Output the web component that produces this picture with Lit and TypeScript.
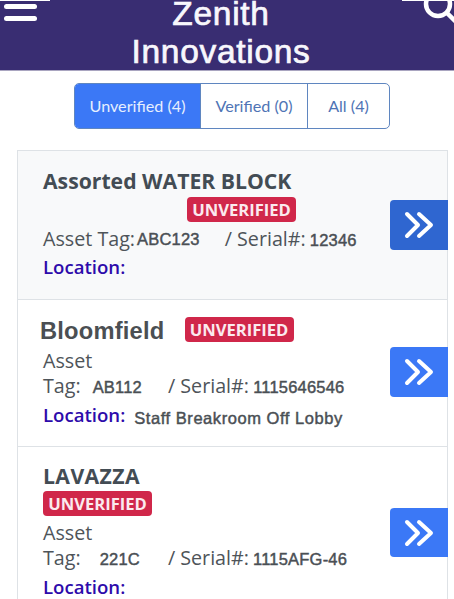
import { LitElement, html, css, svg } from "lit";
import { customElement } from "lit/decorators.js";

type Item = { cls: string; name: string; tag: string; serial: string; loc: string; shade?: boolean };

const items: Item[] = [
  { cls: "a", name: "Assorted WATER BLOCK", tag: "ABC123", serial: "12346", loc: "", shade: true },
  { cls: "b", name: "Bloomfield", tag: "AB112", serial: "1115646546", loc: "Staff Breakroom Off Lobby" },
  { cls: "c", name: "LAVAZZA", tag: "221C", serial: "1115AFG-46", loc: "" },
];

const chevrons = svg`<svg class="chev" viewBox="0 0 30 28" width="30" height="28" fill="none" stroke="#fff" stroke-width="4" stroke-linecap="round" stroke-linejoin="round"><path d="M3 3l11 11L3 25M15 3l12 11-12 11"/></svg>`;

@customElement("app-root")
export class AppRoot extends LitElement {
  static styles = css`
    :host { display: block; width: 454px; height: 599px; overflow: hidden; background: #fff; font-family: "Open Sans", "Noto Sans", sans-serif; color: #454d55; }
    .header { position: relative; height: 71px; background: #392d72; border-bottom: 1px solid #a9a5c0; box-sizing: border-box; display: flex; justify-content: center; }
    .title { width: 220px; margin-left: -12px; text-align: center; color: #f8f7fc; font: 500 33.5px "Liberation Sans", Arial, sans-serif; letter-spacing: 0.7px; -webkit-text-stroke: 0.7px #f8f7fc; }
    .title span { display: block; }
    .title .t1 { line-height: 28px; }
    .title .t2 { line-height: 36px; margin-top: 6px; }
    .strip { position: absolute; top: 0; height: 1px; background: #fff; }
    .strip.l { left: 0; width: 50px; }
    .strip.r { right: 0; width: 52px; }
    .burger { position: absolute; left: 4px; top: 4px; width: 33px; display: flex; flex-direction: column; gap: 7px; }
    .burger i { display: block; height: 5px; border-radius: 2.5px; background: #fff; }
    .search { position: absolute; right: 0; top: 0; }
    .tabs { display: flex; width: 316px; height: 46px; box-sizing: border-box; margin: 12px 0 21px 74px; border: 1px solid #5f86c0; border-radius: 5px; overflow: hidden; font: 400 16.2px "Lato", sans-serif; color: #4f74b5; }
    .tabs div { display: flex; align-items: center; justify-content: center; padding-bottom: 2px; box-sizing: border-box; }
    .tabs .on { width: 125px; background: #3b78f6; color: #e6effe; }
    .tabs .mid { width: 108px; border-left: 1px solid #5f86c0; border-right: 1px solid #5f86c0; }
    .tabs .end { flex: 1; }
    .list { margin-left: 17px; width: 431px; box-sizing: border-box; border: 1px solid #dee2e6; border-bottom: 0; }
    .card { display: flex; align-items: center; box-sizing: border-box; border-bottom: 1px solid #dee2e6; background: #fff; }
    .card.shade { background: #f8f9fa; }
    .card.a { height: 149px; }
    .card.b { height: 147px; }
    .card.c { height: 160px; align-items: flex-start; }
    .info { flex: 1; padding-left: 25px; min-width: 0; }
    .name { font-size: 21.2px; font-weight: 700; line-height: 28px; color: #434c54; }
    .badge { display: inline-block; background: #d0274a; color: #fbeaee; font-size: 16.6px; font-weight: 700; line-height: 25px; height: 25px; width: 109px; text-align: center; border-radius: 4px; }
    .lab { font-size: 19.7px; color: #4e5459; }
    .val { font: 400 16.5px "Liberation Sans", Arial, sans-serif; letter-spacing: 0.2px; color: #4a4f54; -webkit-text-stroke: 0.45px #4a4f54; }
    .loc { font-size: 18.6px; font-weight: 600; color: #2d0bab; }
    .row { line-height: 26px; white-space: nowrap; }
    .go { flex: none; width: 58px; height: 50px; margin-right: -1px; border-radius: 4px 0 0 4px; background: #3b78f6; display: flex; align-items: center; justify-content: center; }
    .card.shade .go { background: #2f66d0; }
    .a .info { padding-top: 16px; align-self: flex-start; }
    .a .badge { display: block; margin-left: 144px; margin-top: 2px; }
    .a .r1 { margin-top: 4px; }
    .a .r2 { margin-top: 1px; }
    .a .t { margin: 0 25px 0 2px; position: relative; top: -1px; }
    .b .info { align-self: flex-start; padding-top: 16px; }
    .b .name { display: inline-block; font: 700 23.7px/30px "Liberation Sans", Arial, sans-serif; letter-spacing: 0.2px; color: #4b4f53; margin-left: -3px; margin-right: 16px; }
    .b .badge { vertical-align: 3px; }
    .b .r0 { margin-top: 2px; }
    .b .t { margin: 0 26px 0 12px; }
    .b .r1 { margin-top: -2px; }
    .b .r2 { margin-top: 2px; }
    .b .v2 { margin-left: 9px; position: relative; top: 2px; letter-spacing: 0.55px; }
    .b .go { margin-top: -2px; }
    .c .info { padding-top: 15px; }
    .c .name { letter-spacing: 0.4px; }
    .c .t { margin: 0 28px 0 19px; }
    .c .r0 { margin-top: 4px; }
    .c .badge { display: block; margin-top: 1px; }
    .c .r1 { margin-top: -2px; }
    .c .r2 { margin-top: 2px; }
    .c .go { margin-top: 61px; height: 49px; }
  `;

  private row(i: Item) {
    const wrap = i.cls !== "a";
    return html`
      ${wrap ? html`<div class="row r0"><span class="lab">Asset</span></div>` : ""}
      <div class="row r1"><span class="lab">${wrap ? "Tag:" : "Asset Tag:"}</span><span class="val t">${i.tag}</span><span class="lab">/ Serial#:</span> <span class="val">${i.serial}</span></div>
      <div class="row r2"><span class="loc">Location:</span>${i.loc ? html`<span class="val v2">${i.loc}</span>` : ""}</div>
    `;
  }

  render() {
    return html`
      <div class="header">
        <div class="strip l"></div><div class="strip r"></div>
        <div class="burger"><i></i><i></i></div>
        <div class="title"><span class="t1">Zenith</span><span class="t2">Innovations</span></div>
        <svg class="search" width="52" height="30" viewBox="0 0 52 30" fill="none" stroke="#fff" stroke-width="4.5" stroke-linecap="round"><circle cx="36" cy="4" r="12"/><path d="M45 13l8 8"/></svg>
      </div>
      <div class="tabs">
        <div class="on">Unverified (4)</div>
        <div class="mid">Verified (0)</div>
        <div class="end">All (4)</div>
      </div>
      <div class="list">
        ${items.map(
          (i) => html`<div class="card ${i.cls} ${i.shade ? "shade" : ""}">
            <div class="info">
              <span class="name">${i.name}</span>
              <span class="badge">UNVERIFIED</span>
              ${this.row(i)}
            </div>
            <div class="go">${chevrons}</div>
          </div>`
        )}
      </div>
    `;
  }
}
